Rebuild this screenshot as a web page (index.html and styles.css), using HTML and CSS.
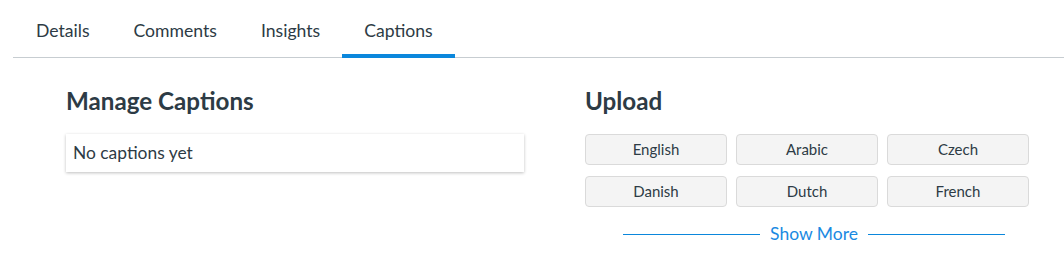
FILE: index.html
```html
<!DOCTYPE html>
<html lang="en">
<head>
<meta charset="utf-8">
<title>Captions</title>
<link rel="stylesheet" href="styles.css">
</head>
<body>
<nav class="tabs">
  <a class="tab">Details</a>
  <a class="tab">Comments</a>
  <a class="tab">Insights</a>
  <a class="tab active">Captions</a>
</nav>
<main class="content">
  <section class="col-left">
    <h2 class="heading">Manage Captions</h2>
    <div class="card">No captions yet</div>
  </section>
  <section class="col-right">
    <h2 class="heading">Upload</h2>
    <div class="lang-grid">
      <button class="lang">English</button>
      <button class="lang">Arabic</button>
      <button class="lang">Czech</button>
      <button class="lang">Danish</button>
      <button class="lang">Dutch</button>
      <button class="lang">French</button>
    </div>
    <div class="show-more">
      <span class="rule"></span>
      <a class="more-link">Show More</a>
      <span class="rule"></span>
    </div>
  </section>
</main>
</body>
</html>
```
FILE: styles.css
```css
html, body {
  margin: 0;
  padding: 0;
  background: #ffffff;
}
body {
  font-family: Lato, "Open Sans", sans-serif;
  color: #2d3b45;
}
.tabs {
  display: flex;
  margin-left: 13px;
  padding-left: 1px;
  height: 57px;
  border-bottom: 1px solid #c7cdd1;
}
.tab {
  position: relative;
  padding: 21px 22px 0;
  font-size: 17.6px;
  line-height: 20px;
  color: #2d3b45;
}
.tab.active::after {
  content: "";
  position: absolute;
  left: 0;
  right: 0;
  bottom: -1px;
  height: 4px;
  background: #0b87dc;
}
.content {
  display: flex;
  gap: 61px;
  padding-left: 66px;
  margin-top: 29px;
}
.col-left {
  width: 458px;
}
.col-right {
  width: 444px;
}
.heading {
  margin: 0 0 19px;
  font-size: 24.2px;
  line-height: 28px;
  font-weight: 700;
  color: #2d3b45;
}
.card {
  height: 22px;
  padding: 8px 7px;
  font-size: 17.4px;
  line-height: 22px;
  background: #fff;
  box-shadow: 0 1px 3px rgba(0, 0, 0, 0.25);
}
.lang-grid {
  display: grid;
  grid-template-columns: repeat(3, 142px);
  column-gap: 9px;
  row-gap: 11px;
}
.lang {
  height: 31px;
  margin: 0;
  padding: 0 0 2px;
  font-family: Lato, "Open Sans", sans-serif;
  font-size: 15px;
  color: #2d3b45;
  background: #f4f4f4;
  border: 1px solid #dadada;
  border-radius: 4px;
}
.show-more {
  display: flex;
  align-items: center;
  gap: 10px;
  width: 382px;
  margin: 16px 0 0 38px;
}
.rule {
  flex: 1;
  height: 1px;
  background: #0b87dc;
}
.more-link {
  font-size: 17.5px;
  line-height: 22px;
  color: #1a8ae2;
}
```
